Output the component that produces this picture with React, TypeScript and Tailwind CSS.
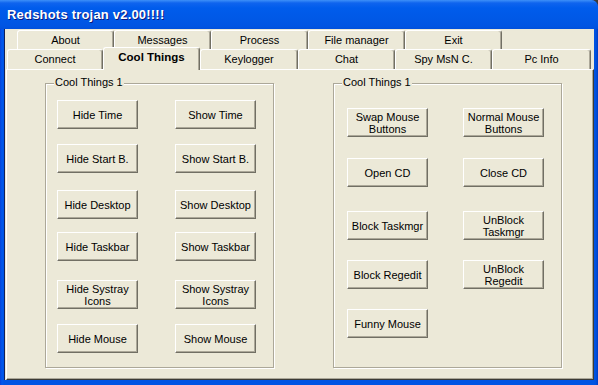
import React from "react";

const font = "font-['Liberation_Sans',Arial,sans-serif]";

const backTabs = ["About", "Messages", "Process", "File manager", "Exit"];

const frontTabs = [
  { label: "Connect", w: "w-[96px]" },
  { label: "Cool Things", w: "w-[97px]", selected: true },
  { label: "Keylogger", w: "w-[98px]" },
  { label: "Chat", w: "w-[97px]" },
  { label: "Spy MsN C.", w: "w-[97px]" },
  { label: "Pc Info", w: "w-[99px]" },
];

// each row: top offset (margin above) and the two buttons
const leftRows = [
  { mt: "mt-[16px]", a: ["Hide Time"], b: ["Show Time"] },
  { mt: "mt-[15px]", a: ["Hide Start B."], b: ["Show Start B."] },
  { mt: "mt-[17px]", a: ["Hide Desktop"], b: ["Show Desktop"] },
  { mt: "mt-[13px]", a: ["Hide Taskbar"], b: ["Show Taskbar"] },
  { mt: "mt-[19px]", a: ["Hide Systray", "Icons"], b: ["Show Systray", "Icons"] },
  { mt: "mt-[15px]", a: ["Hide Mouse"], b: ["Show Mouse"] },
];

const rightRows = [
  { mt: "mt-[24px]", a: ["Swap Mouse", "Buttons"], b: ["Normal Mouse", "Buttons"] },
  { mt: "mt-[21px]", a: ["Open CD"], b: ["Close CD"] },
  { mt: "mt-[24px]", a: ["Block Taskmgr"], b: ["UnBlock", "Taskmgr"] },
  { mt: "mt-[20px]", a: ["Block Regedit"], b: ["UnBlock", "Regedit"] },
  { mt: "mt-[20px]", a: ["Funny Mouse"], b: null },
];

function Button({ lines }: { lines: string[] }) {
  return (
    <div className="w-[81px] h-[29px] flex flex-col items-center justify-center bg-[#ECE9D8] border border-t-white border-l-white border-r-[#716F64] border-b-[#716F64] shadow-[inset_-1px_-1px_0_#ACA899] text-[11px] leading-[12px] text-black">
      {lines.map((l) => (
        <span key={l}>{l}</span>
      ))}
    </div>
  );
}

function Group({ rows, pl, gap, className }: { rows: typeof leftRows; pl: string; gap: string; className: string }) {
  return (
    <div className={"relative w-[229px] h-[285px] border border-[#ACA899] shadow-[inset_1px_1px_0_#fff,1px_1px_0_#fff] " + pl + " " + className}>
      <span className="absolute -top-[8px] left-[8px] px-[1px] bg-[#ECE9D8] text-[11px] leading-[13px] text-black">Cool Things 1</span>
      {rows.map((r, i) => (
        <div key={i} className={"flex " + gap + " " + r.mt}>
          <Button lines={r.a} />
          {r.b && <Button lines={r.b} />}
        </div>
      ))}
    </div>
  );
}

export default function App() {
  return (
    <div className={"w-[598px] h-[385px] bg-[#3a3a3a] " + font}>
      <div className="w-full h-full flex flex-col rounded-tr-[7px] overflow-hidden bg-[#0054E3]">
        {/* title bar */}
        <div className="h-[29px] shrink-0 flex items-center pl-[7px] bg-[linear-gradient(to_bottom,#3D90F8_0px,#0F64EE_3px,#005CEC_8px,#0058E6_20px,#0055E3_26px,#0050DC_29px)]">
          <span className="text-white font-bold text-[13px] tracking-[0.2px] [text-shadow:1px_1px_0_#0A1A80]">Redshots trojan v2.00!!!!</span>
        </div>
        {/* frame + client */}
        <div className="flex-1 flex pl-[4px] pr-[4px] pb-[5px] bg-[linear-gradient(to_right,#0842D8_0px,#0058EE_2px,#0054E3_4px,#0054E3_594px,#0050DE_596px,#003CC4_598px)]">
          <div className="flex-1 flex flex-col bg-[#ECE9D8] border-l border-l-[#10205a]">
            {/* back row */}
            <div className="flex h-[20px] pl-[12px] pt-[1px]">
              {backTabs.map((t) => (
                <div key={t} className="w-[97px] h-[20px] flex items-center justify-center border-l border-t border-r border-l-white border-t-white border-r-[#716F64] rounded-t-[3px] shadow-[inset_-1px_0_0_#ACA899] text-[11px] text-black">
                  {t}
                </div>
              ))}
            </div>
            {/* front row */}
            <div className="flex h-[20px] pl-[2px]">
              {frontTabs.map((t) =>
                t.selected ? (
                  <div key={t.label} className={t.w + " relative z-10 self-start -mt-[2px] h-[23px] pb-[2px] flex items-center justify-center bg-[#ECE9D8] border-l border-t border-r border-l-white border-t-white border-r-[#716F64] rounded-t-[3px] shadow-[inset_-1px_0_0_#ACA899] text-[11.5px] font-bold text-black"}>
                    {t.label}
                  </div>
                ) : (
                  <div key={t.label} className={t.w + " h-[20px] flex items-center justify-center bg-[#ECE9D8] border-l border-t border-r border-l-white border-t-white border-r-[#716F64] rounded-t-[3px] shadow-[inset_-1px_0_0_#ACA899] text-[11px] text-black"}>
                    {t.label}
                  </div>
                )
              )}
            </div>
            {/* page */}
            <div className="flex-1 ml-[1px] flex border-l border-t border-r border-b border-l-white border-t-white border-r-[#3c3b35] border-b-[#3c3b35] shadow-[inset_-1px_-1px_0_#ACA899]">
              <Group rows={leftRows} pl="pl-[11px]" gap="gap-[37px]" className="ml-[38px] mt-[13px]" />
              <Group rows={rightRows} pl="pl-[13px]" gap="gap-[35px]" className="ml-[59px] mt-[13px]" />
            </div>
          </div>
        </div>
      </div>
    </div>
  );
}
